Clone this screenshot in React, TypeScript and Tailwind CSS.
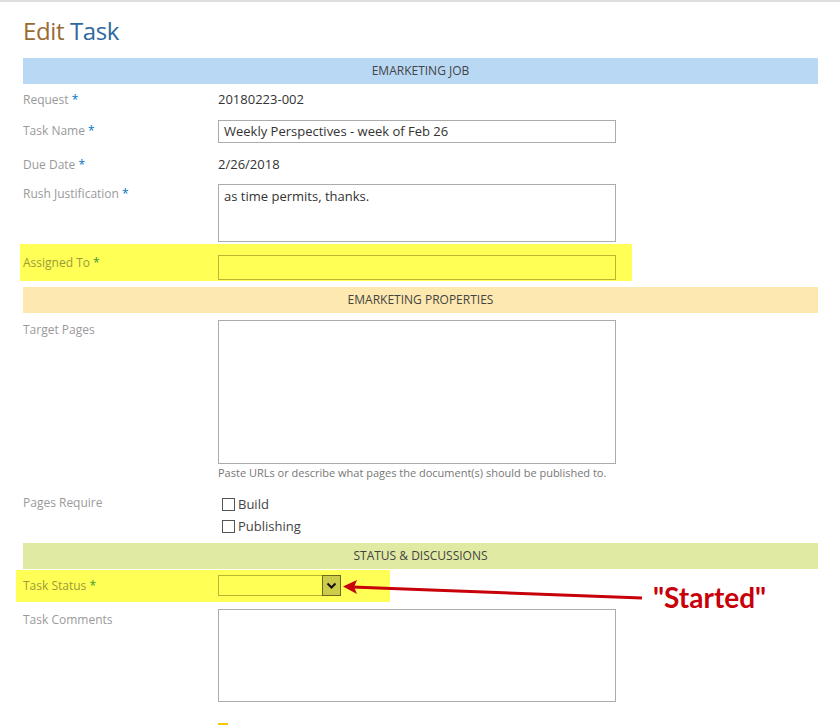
import React from "react";

const font = { fontFamily: '"Open Sans", "Noto Sans", Arial, sans-serif' };

function Star({ green }: { green?: boolean }) {
  return <span className={green ? "text-[#3a9a3a]" : "text-[#0072c6]"}> *</span>;
}

function Band({ color, text }: { color: string; text: string }) {
  return (
    <div className={`h-[26px] flex items-center justify-center text-[12px] text-[#444] ${color}`}>{text}</div>
  );
}

export default function App() {
  return (
    <div className="w-[840px] h-[725px] overflow-hidden bg-white relative border-t-2 border-[#dedede]" style={font}>
      <div className="pl-[23px] w-[818px]">
        <h1 className="text-[24px] leading-[30px] mt-[14px] tracking-[-0.4px]">
          <span className="text-[#9a6a34]">Edit</span> <span className="text-[#2f68a0]">Task</span>
        </h1>
        <div className="mt-[12px]">
          <Band color="bg-[#b9d8f4]" text="EMARKETING JOB" />
        </div>

        {/* Request */}
        <div className="flex h-[31px] items-center text-[12px]">
          <div className="w-[195px] text-[#9a9a9a]">Request<Star /></div>
          <div className="text-[#333] text-[13px]">20180223-002</div>
        </div>
        {/* Task Name */}
        <div className="flex h-[30px] items-center text-[12px] mt-[5px]">
          <div className="w-[195px] text-[#9a9a9a] self-start pt-[2px]">Task Name<Star /></div>
          <div className="w-[398px] h-[23px] border border-[#ababab] flex items-center px-[5px] text-[13px] text-[#333] self-start">
            Weekly Perspectives - week of Feb 26
          </div>
        </div>
        {/* Due Date */}
        <div className="flex h-[24px] items-center text-[12px] mt-[3px]">
          <div className="w-[195px] text-[#9a9a9a]">Due Date<Star /></div>
          <div className="text-[#333] text-[13px]">2/26/2018</div>
        </div>
        {/* Rush */}
        <div className="flex text-[12px] mt-[7px]">
          <div className="w-[195px] text-[#9a9a9a] pt-[1px]">Rush Justification<Star /></div>
          <div className="w-[398px] h-[58px] border border-[#ababab] px-[5px] pt-[2px] text-[13px] text-[#333]">
            as time permits, thanks.
          </div>
        </div>
        {/* Assigned */}
        <div className="flex items-center h-[37px] bg-[#ffff55] -ml-[3px] pl-[3px] w-[612px] text-[12px] mt-[2px]">
          <div className="w-[195px] text-[#9c9c3a]">Assigned To<Star green /></div>
          <div className="w-[398px] h-[25px] mt-[9px] border border-[#b8b830] bg-[#ffff55]" />
        </div>

        <div className="mt-[6px]">
          <Band color="bg-[#fde8af]" text="EMARKETING PROPERTIES" />
        </div>

        {/* Target Pages */}
        <div className="flex text-[12px] mt-[7px]">
          <div className="w-[195px] text-[#9a9a9a] pt-[1px]">Target Pages</div>
          <div>
            <div className="w-[398px] h-[144px] border border-[#ababab]" />
            <div className="text-[11px] text-[#777] mt-[1px]">
              Paste URLs or describe what pages the document(s) should be published to.
            </div>
          </div>
        </div>

        {/* Pages Require */}
        <div className="flex text-[12px] mt-[11px]">
          <div className="w-[195px] text-[#9a9a9a] pt-[1px]">Pages Require</div>
          <div className="pl-[4px] text-[13px] text-[#444]">
            <div className="flex items-center h-[22px] mt-[1px]">
              <span className="w-[13px] h-[13px] border border-[#555] mr-[3px] inline-block" />
              Build
            </div>
            <div className="flex items-center h-[22px]">
              <span className="w-[13px] h-[13px] border border-[#555] mr-[3px] inline-block" />
              Publishing
            </div>
          </div>
        </div>

        <div className="mt-[5px]">
          <Band color="bg-[#e0eaa3]" text="STATUS & DISCUSSIONS" />
        </div>

        {/* Task Status */}
        <div className="flex items-center h-[32px] bg-[#ffff55] -ml-[7px] pl-[7px] w-[374px] text-[12px] mt-[1px]">
          <div className="w-[195px] text-[#9c9c3a]">Task Status<Star green /></div>
          <div className="w-[123px] h-[21px] border border-[#b8b830] bg-[#ffff55] flex justify-end">
            <div className="w-[19px] h-[21px] -mt-[1px] -mr-[1px] border border-[#6a6a20] bg-[#cccc4a] flex items-center justify-center">
              <svg width="11" height="8" viewBox="0 0 11 8">
                <path d="M1.5 1.5 L5.5 5.5 L9.5 1.5" stroke="#111" strokeWidth="2" fill="none" />
              </svg>
            </div>
          </div>
        </div>

        {/* Task Comments */}
        <div className="flex text-[12px] mt-[7px]">
          <div className="w-[195px] text-[#9a9a9a] pt-[2px]">Task Comments</div>
          <div className="w-[398px] h-[93px] border border-[#ababab]" />
        </div>

        <div className="flex text-[12px] mt-[20px]">
          <div className="w-[195px]" />
          <div className="flex items-start">
            <span className="w-[10px] h-[10px] bg-[#f5c800] inline-block mt-[1px]" />
            <span className="ml-[8px] text-[#999]">Attach files</span>
          </div>
        </div>
      </div>

      {/* annotation arrow */}
      <svg className="absolute left-[340px] top-[574px]" width="310" height="32" viewBox="0 0 310 32">
        <line x1="12" y1="11" x2="302" y2="22" stroke="#c8000a" strokeWidth="3" />
        <path d="M3 10.5 L17 4 L14 11 L17 18 Z" fill="#c8000a" />
      </svg>
      <div
        className="absolute left-[653px] top-[577px] text-[28px] font-bold text-[#c8000a] leading-[36px]"
        style={{ fontFamily: 'Lato, "DejaVu Sans", sans-serif' }}
      >
        "Started"
      </div>
    </div>
  );
}
